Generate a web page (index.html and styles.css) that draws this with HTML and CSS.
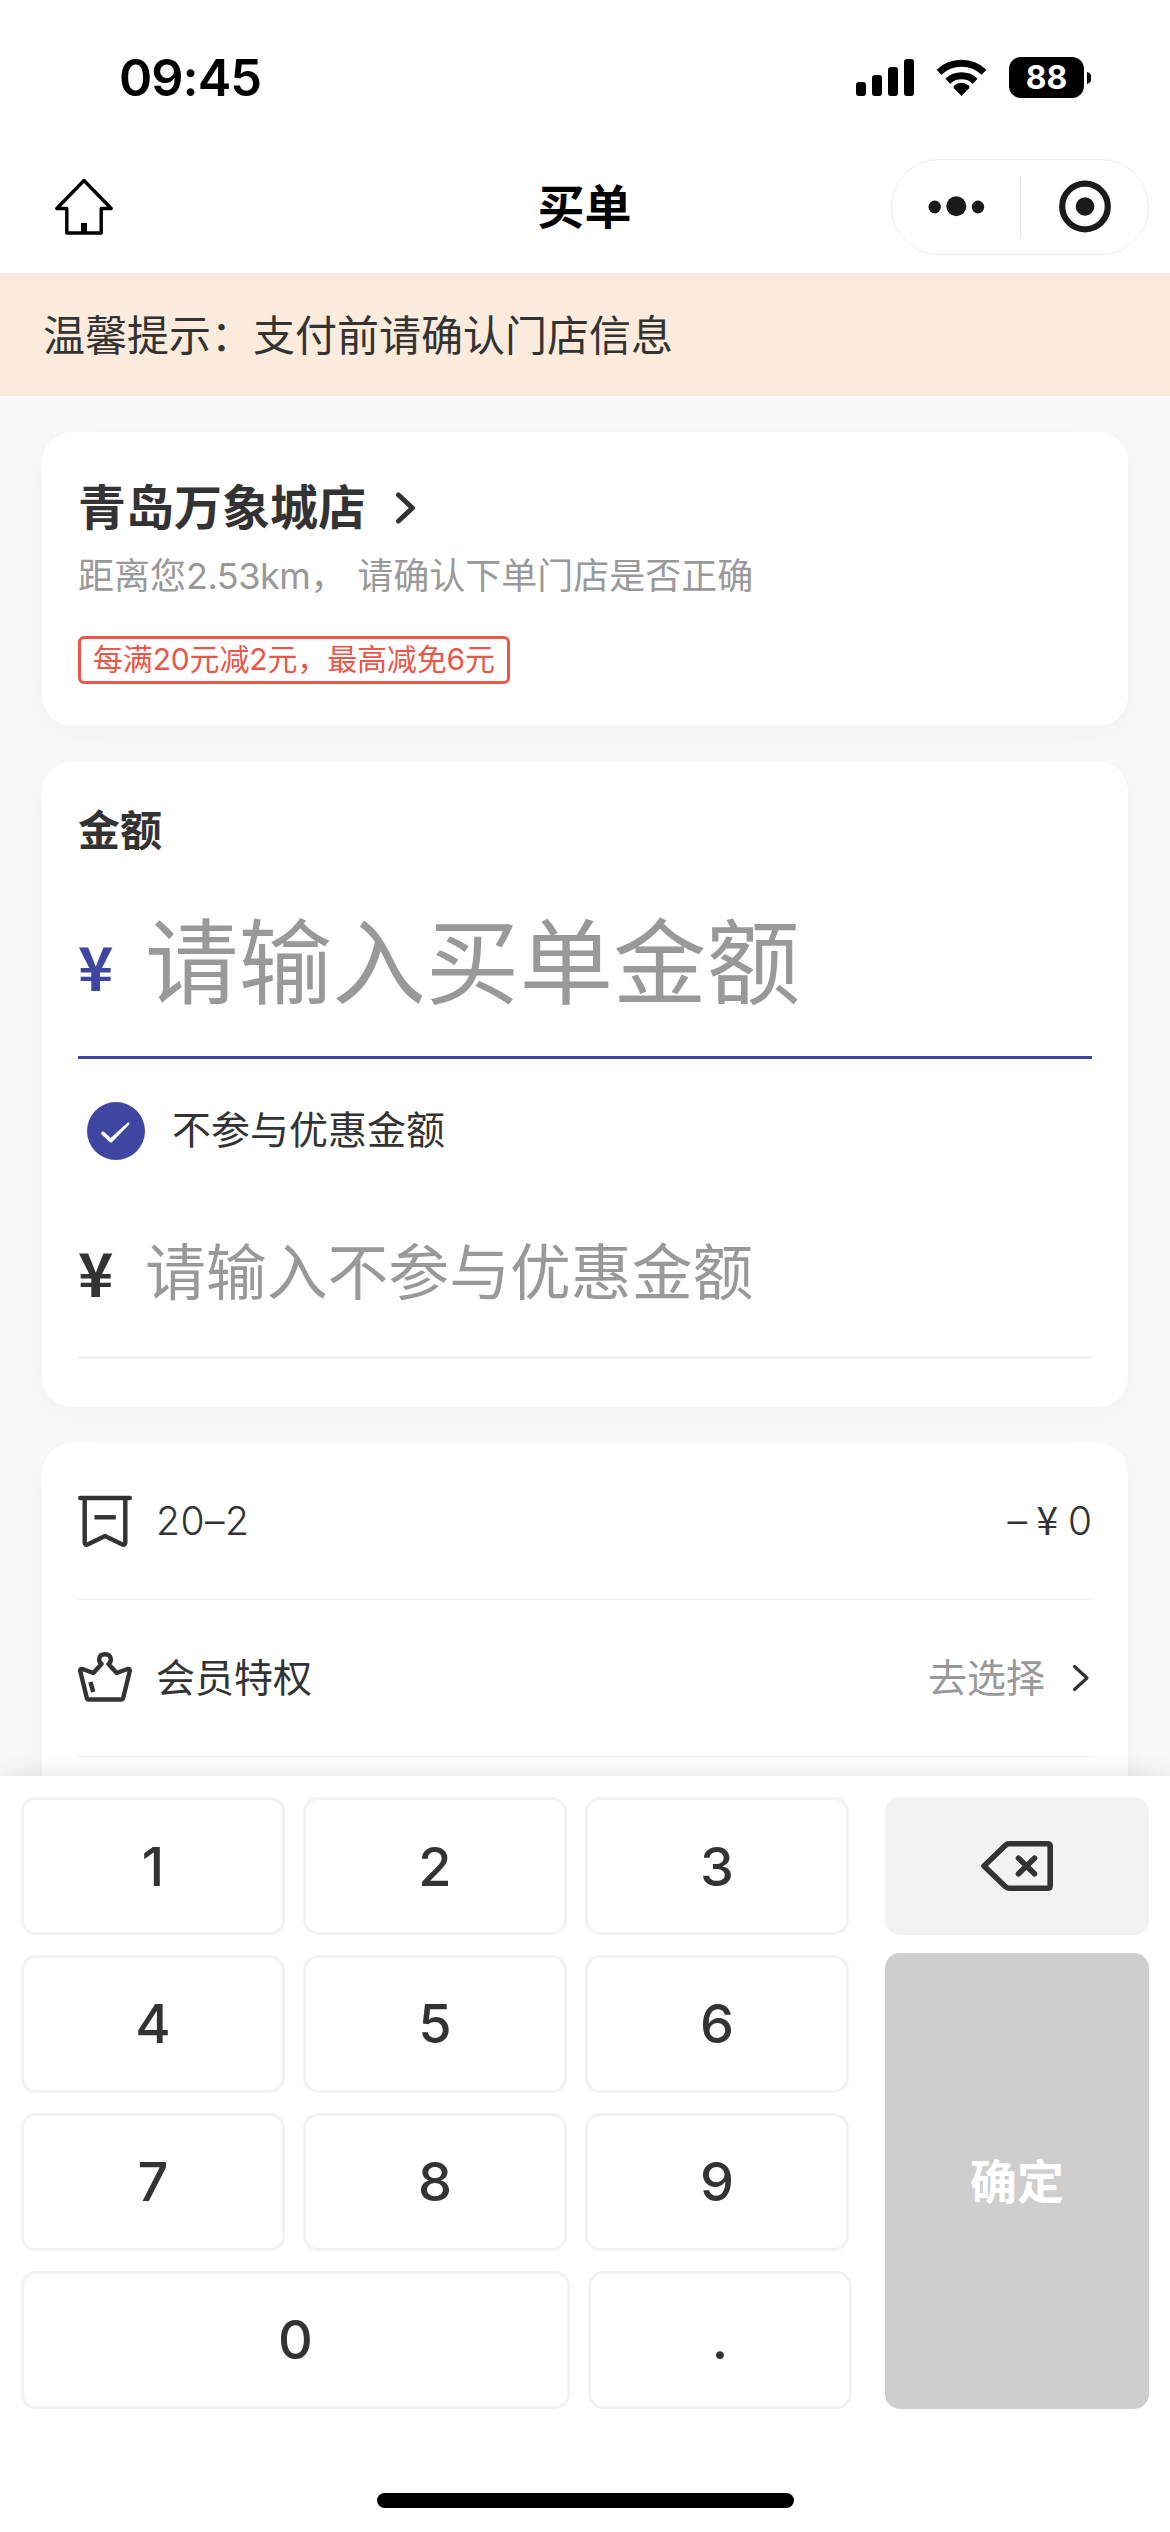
FILE: index.html
```html
<!DOCTYPE html>
<html lang="zh-CN">
<head>
<meta charset="utf-8">
<title>买单</title>
<link rel="stylesheet" href="styles.css">
</head>
<body>
<header class="header">
  <div class="status">
    <span class="time">09:45</span>
    <div class="indicators">
      <svg class="signal" width="58" height="37" viewBox="0 0 58 37"><rect x="0" y="23" width="10" height="14" rx="3"/><rect x="16" y="16" width="10" height="21" rx="3"/><rect x="32" y="8" width="10" height="29" rx="3"/><rect x="48" y="0" width="10" height="37" rx="3"/></svg>
      <svg class="wifi" width="51" height="37" viewBox="0 0 51 37"><path d="M25.500 37L18 29.200a2 2 0 0 1 0-2.400a11 11 0 0 1 15 0a2 2 0 0 1 0 2.400Z"/><path d="M11.800 22.200a20 20 0 0 1 27.400 0M3 13.200a32.500 32.500 0 0 1 45 0" fill="none" stroke="#000" stroke-width="7"/></svg>
      <div class="battery"><span class="level">88</span><svg width="4" height="12" viewBox="0 0 4 12"><path d="M0 0a6.200 6.200 0 0 1 0 12Z"/></svg></div>
    </div>
  </div>
  <nav class="nav">
    <svg class="home" width="60" height="58" viewBox="0 0 60 58" fill="none" stroke="#000" stroke-width="3.400" stroke-linejoin="round"><path d="M30 2.500L2.800 30.500H12.800V55H47.200V30.500H57.200Z"/><path d="M30 45V55" stroke-width="6"/></svg>
    <h1 class="title">买单</h1>
    <div class="capsule">
      <svg width="256" height="94" viewBox="0 0 256 94"><g fill="#1a1a1a"><ellipse cx="42.700" cy="47" rx="6.200" ry="6.400"/><circle cx="64.300" cy="46.200" r="10"/><ellipse cx="86" cy="47" rx="6.200" ry="6.400"/><circle cx="193" cy="46.500" r="9.300"/></g><path d="M128.500 17V77" stroke="#e2e2e2"/><circle cx="193" cy="46.500" r="22.800" fill="none" stroke="#1a1a1a" stroke-width="6.200"/></svg>
    </div>
  </nav>
</header>
<p class="notice">温馨提示：支付前请确认门店信息</p>
<main class="content">
  <section class="card store">
    <h2 class="store-name">青岛万象城店<svg class="arrow" width="22" height="32" viewBox="0 0 22 32"><path d="M3.500 3L17.500 16L3.500 29"/></svg></h2>
    <p class="distance">距离您<span class="num">2.53km</span>，<span class="gap"></span>请确认下单门店是否正确</p>
    <span class="tag">每满20元减2元，最高减免6元</span>
  </section>
  <section class="card amount">
    <h2 class="label">金额</h2>
    <div class="field field-main"><span class="yen">¥</span><span class="placeholder">请输入买单金额</span></div>
    <div class="option">
      <svg width="58" height="58" viewBox="0 0 58 58"><circle cx="29" cy="29" r="29" fill="#3f46a1"/><path d="M14.200 30.500Q16 28.300 17.700 30.500L23.700 36L40.500 20.800Q42.500 20 42.400 22.300L25.200 39.900Q23.700 41.200 22.200 39.700L14.700 32.500Q14 31.500 14.200 30.500Z" fill="#fff"/></svg>
      <span class="option-text">不参与优惠金额</span>
    </div>
    <div class="field field-extra"><span class="yen">¥</span><span class="placeholder">请输入不参与优惠金额</span></div>
  </section>
  <section class="card discounts">
    <div class="row">
      <svg width="54" height="54" viewBox="0 0 54 54" class="line-icon"><path d="M2.200 4H51.800M6.700 4V49Q7 51.500 9.500 50.500L27 42L44.500 50.500Q47 51.500 47.300 49V4"/><path d="M16.500 23.300H37.800" stroke-linecap="butt"/></svg>
      <span class="row-name num">20–2</span>
      <span class="row-value num">–<span class="sign">¥</span>0</span>
    </div>
    <div class="row">
      <svg width="54" height="54" viewBox="0 0 54 54" class="line-icon"><path d="M2.200 20Q2 17.500 4.500 18L15.300 22L23.500 13C20.500 11 19.500 3.200 27 3.200S33.500 11 30.500 13L38.700 22L49.500 18Q52 17.500 51.800 20L45.300 46.500Q45 48.500 43 48.500H11Q9 48.500 8.700 46.500Z"/><path d="M12.500 31L15.200 41" stroke-width="4.500" stroke-linecap="butt"/></svg>
      <span class="row-name">会员特权</span>
      <span class="row-value muted">去选择</span>
      <svg class="more" width="18" height="28" viewBox="0 0 18 28"><path d="M2.500 2.500L15 14L2.500 25.500"/></svg>
    </div>
  </section>
</main>
<div class="keypad">
  <div class="keys">
    <div class="digits">
      <button class="key">1</button><button class="key">2</button><button class="key">3</button>
      <button class="key">4</button><button class="key">5</button><button class="key">6</button>
      <button class="key">7</button><button class="key">8</button><button class="key">9</button>
      <div class="last"><button class="key zero">0</button><button class="key">.</button></div>
    </div>
    <div class="actions">
      <button class="delete"><svg width="74" height="52" viewBox="0 0 74 52" fill="none" stroke="#333" stroke-width="5.600" stroke-linejoin="round" stroke-linecap="round"><path d="M4 26L25.500 5.200Q27 3.800 29 3.800H67.500Q70.200 3.800 70.200 6.500V45.500Q70.200 48.200 67.500 48.200H29Q27 48.200 25.500 46.800Z"/><path d="M38.500 18.300L54.500 33.700M54.500 18.300L38.500 33.700"/></svg></button>
      <button class="confirm">确定</button>
    </div>
  </div>
  <div class="home-indicator"></div>
</div>
</body>
</html>
```
FILE: styles.css
```css
* { box-sizing: border-box; margin: 0; padding: 0; }
html, body { width: 1170px; height: 2532px; overflow: hidden; }
body {
  background: #f9f9f9;
  color: #333;
  font-family: "Inter", "Noto Sans CJK SC", sans-serif;
  position: relative;
}
svg { display: block; flex: none; }
button { font: inherit; color: inherit; border: 0; background: none; }

.header { height: 273px; background: #fff; color: #000; }
.status { height: 159px; padding: 48px 79px 0 119px; display: flex; justify-content: space-between; }
.time { font-size: 50.500px; line-height: 60px; font-weight: 600; letter-spacing: -1px; }
.indicators { display: flex; align-items: center; height: 59px; }
.wifi { margin: 0 22px; }
.battery { display: flex; align-items: center; gap: 3px; }
.level {
  width: 75px; height: 41px; border-radius: 12px; background: #000; color: #fff;
  font-size: 32px; line-height: 41px; font-weight: 700; text-align: center;
}
.nav { height: 96px; padding: 0 21px 0 54px; display: grid; grid-template-columns: 258px 1fr 258px; align-items: center; }
.title { font-family: "Noto Sans CJK SC", sans-serif; font-size: 47px; line-height: 60px; font-weight: 700; text-align: center; padding-right: 34px; padding-bottom: 6px; }
.capsule { width: 258px; height: 96px; border: 1px solid #ececec; border-radius: 48px; }

.notice { height: 123px; padding-left: 43px; background: #faebdc; font-size: 42px; line-height: 125px; }

.content { padding: 36px 42px 0; display: flex; flex-direction: column; gap: 36px; }
.card { background: #fff; border-radius: 30px; padding: 0 36px; box-shadow: 0 6px 30px rgba(0, 0, 0, 0.035); }
.store { height: 294px; padding-top: 46px; }
.store-name { display: flex; align-items: center; gap: 29px; font-size: 48px; line-height: 60px; font-weight: 700; }
.arrow path { fill: none; stroke: #333; stroke-width: 5; stroke-linecap: round; stroke-linejoin: round; }
.distance { margin-top: 13px; font-size: 36px; line-height: 50px; color: #999; white-space: nowrap; }
.num { font-weight: 350; }
.distance .num { font-weight: 400; letter-spacing: -0.500px; }
.gap { display: inline-block; width: 11px; }
.tag {
  display: block; width: 432px; height: 48px; margin-top: 35px; padding-left: 12px;
  border: 3px solid #eb5648; border-radius: 6px; color: #eb5648;
  font-size: 30px; line-height: 40px; letter-spacing: -0.150px; white-space: nowrap;
}

.amount { height: 645px; padding-top: 39px; }
.label { font-size: 42px; line-height: 60px; font-weight: 700; }
.field { display: flex; align-items: center; white-space: nowrap; }
.yen { width: 67px; font-family: "Noto Sans CJK SC", sans-serif; font-size: 60px; line-height: 60px; font-weight: 700; }
.placeholder { color: #999; }
.field-main { height: 198px; padding-top: 8px; border-bottom: 3px solid #3f46a1; }
.field-main .yen { color: #3f46a1; padding-top: 5px; }
.field-main .placeholder { font-size: 93.600px; line-height: 110px; }
.option { display: flex; align-items: center; gap: 27px; height: 58px; margin: 43px 0 0 9px; font-size: 39px; line-height: 54px; }
.option-text { padding-bottom: 3px; }
.field-extra { height: 199px; padding-top: 29px; border-bottom: 3px solid #f2f2f2; }
.field-extra .yen { padding-bottom: 4px; }
.field-extra .placeholder { font-size: 60.840px; line-height: 80px; }

.discounts { height: 480px; }
.row { height: 157px; display: flex; align-items: center; border-bottom: 1px solid #f0f0f0; font-size: 39px; line-height: 54px; }
.line-icon { fill: none; stroke: #333; stroke-width: 4.400; stroke-linecap: round; stroke-linejoin: round; }
.row-name { margin-left: 24px; }
.row-name.num { letter-spacing: 0.500px; }
.row-value { margin-left: auto; }
.sign { display: inline-block; width: 41px; line-height: 1; text-align: center; font-family: "Noto Sans CJK SC", sans-serif; font-weight: 400; }
.muted { color: #999; }
.more { margin: 0 2px 0 27px; }
.more path { fill: none; stroke: #333; stroke-width: 3.200; stroke-linecap: round; stroke-linejoin: round; }

.keypad {
  position: fixed; left: 0; right: 0; bottom: 0; height: 756px; background: #fff;
  box-shadow: 0 0 24px rgba(0, 0, 0, 0.12);
  padding: 21px 21px 24px; display: flex; flex-direction: column; justify-content: space-between;
}
.keys { display: flex; justify-content: space-between; font-size: 54px; font-weight: 550; }
.digits { display: grid; grid-template-columns: repeat(3, 264px); gap: 19.500px 18px; }
.key { height: 138px; border: 3px solid #f2f2f2; border-radius: 15px; }
.last { grid-column: 1 / -1; display: flex; gap: 18px; margin-right: -3px; }
.last .key { width: 264px; }
.last .zero { width: 549px; }
.actions { width: 264px; display: flex; flex-direction: column; gap: 18px; }
.delete { height: 138px; border-radius: 15px; background: #f2f2f2; display: flex; align-items: center; justify-content: center; }
.confirm { height: 456px; padding-bottom: 6px; border-radius: 15px; background: #cecece; color: #fff; font-size: 47px; font-weight: 700; }
.home-indicator { width: 417px; height: 15px; border-radius: 8px; background: #000; align-self: center; }
```
